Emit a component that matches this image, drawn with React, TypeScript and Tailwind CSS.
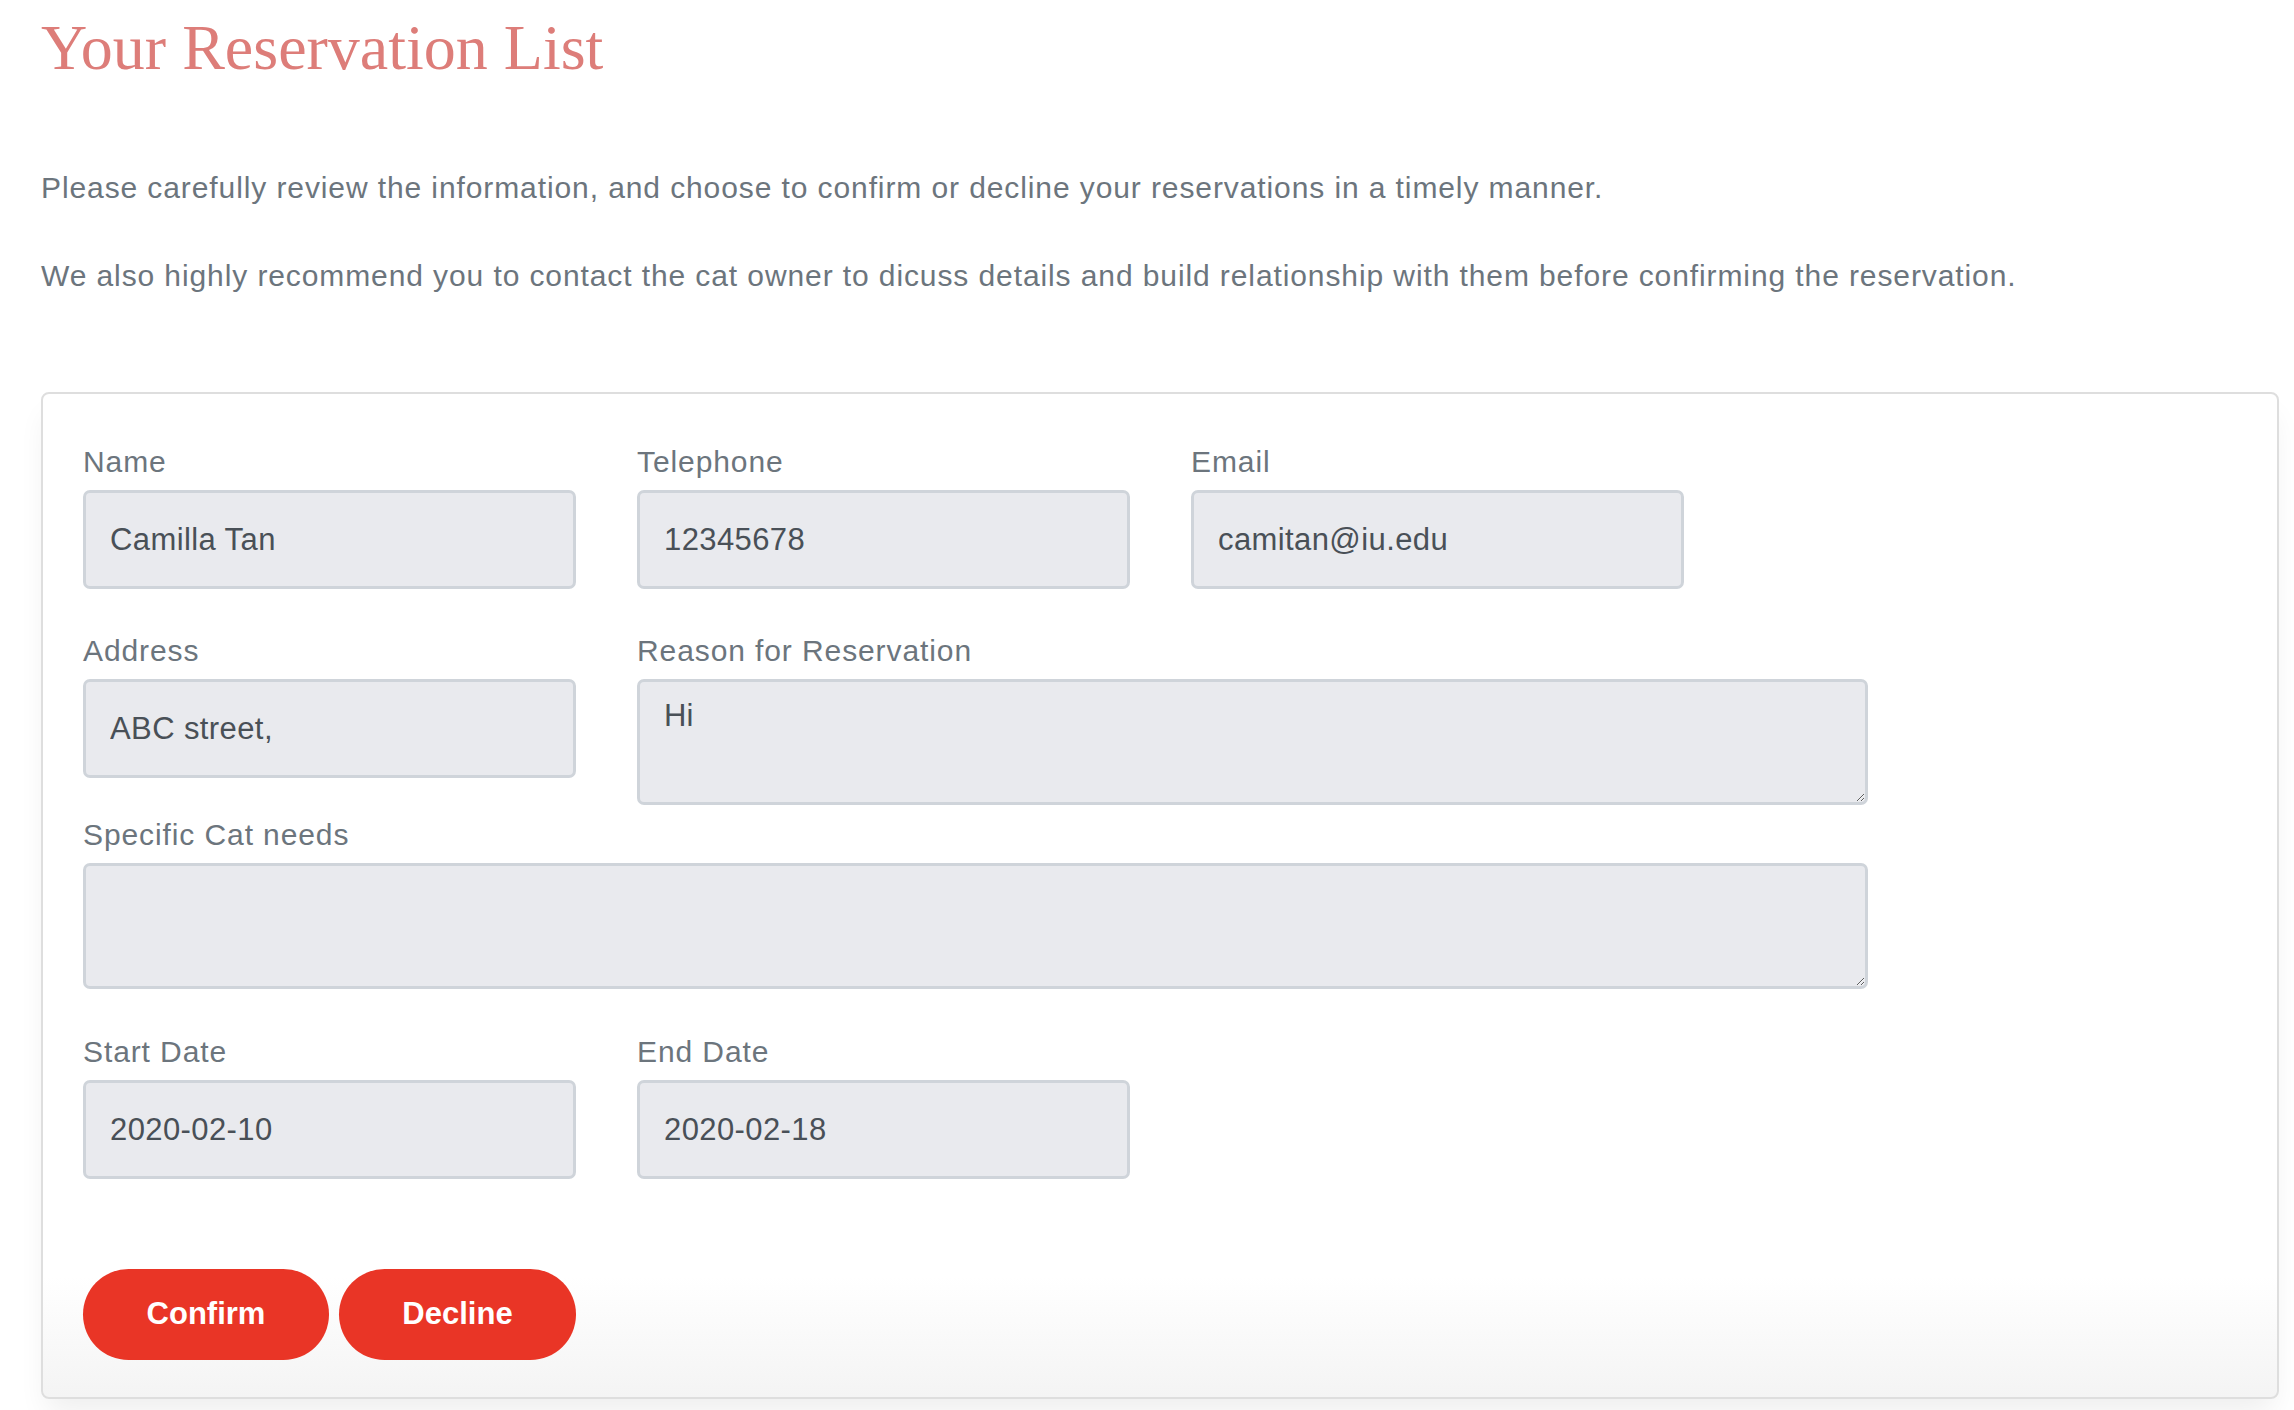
import React from "react";

const sans = "font-['Liberation_Sans',Arial,sans-serif]";

function Field({ label, value, width = "w-[493px]" }: { label: string; value: string; width?: string }) {
  return (
    <div className={`flex flex-col ${width}`}>
      <label className="text-[30px] leading-[40px] tracking-[0.9px] text-[#6c757d]">{label}</label>
      <input
        readOnly
        value={value}
        className="mt-[8px] h-[99px] w-full rounded-[7px] border-[3px] border-[#cfd4da] bg-[#e9eaee] px-[24px] text-[31px] tracking-[0.4px] text-[#495057] outline-none"
      />
    </div>
  );
}

function Area({ label, value, width, height }: { label: string; value: string; width: string; height: string }) {
  return (
    <div className={`flex flex-col ${width}`}>
      <label className="text-[30px] leading-[40px] tracking-[0.9px] text-[#6c757d]">{label}</label>
      <textarea
        readOnly
        value={value}
        className={`mt-[8px] ${height} w-full resize-y rounded-[7px] border-[3px] border-[#cfd4da] bg-[#e9eaee] px-[24px] py-[12px] text-[31px] leading-[44px] text-[#495057] outline-none`}
      />
    </div>
  );
}

export default function App() {
  return (
    <div className={`min-h-screen bg-white ${sans}`}>
      <div className="pl-[41px] pr-[15px]">
        <h1 className="pt-[16px] font-['Liberation_Serif','Times_New_Roman',serif] text-[64px] leading-[64px] text-[#dd7d79]">
          Your Reservation List
        </h1>

        <p className="mt-[88px] text-[30px] leading-[40px] tracking-[0.9px] text-[#6c757d]">
          Please carefully review the information, and choose to confirm or decline your reservations in a timely manner.
        </p>
        <p className="mt-[48px] text-[30px] leading-[40px] tracking-[0.9px] text-[#6c757d]">
          We also highly recommend you to contact the cat owner to dicuss details and build relationship with them before confirming the reservation.
        </p>

        <div className="mt-[96px] h-[1007px] w-[2238px] rounded-[8px] border-2 border-[#dedede] bg-[linear-gradient(to_bottom,#ffffff_88%,#f4f4f4_100%)] px-[40px] pt-[48px] shadow-[0_18px_30px_-6px_rgba(0,0,0,0.07)]">
          <div className="flex gap-x-[61px]">
            <Field label="Name" value="Camilla Tan" />
            <Field label="Telephone" value="12345678" />
            <Field label="Email" value="camitan@iu.edu" />
          </div>

          <div className="mt-[42px] flex items-start gap-x-[61px]">
            <Field label="Address" value="ABC street," />
            <Area label="Reason for Reservation" value="Hi" width="w-[1231px]" height="h-[126px]" />
          </div>

          <div className="mt-[10px]">
            <Area label="Specific Cat needs" value="" width="w-[1785px]" height="h-[126px]" />
          </div>

          <div className="mt-[43px] flex gap-x-[61px]">
            <Field label="Start Date" value="2020-02-10" />
            <Field label="End Date" value="2020-02-18" />
          </div>

          <div className="mt-[90px] flex gap-x-[10px]">
            <button className="h-[91px] w-[246px] rounded-full bg-[#e93526] text-[31px] font-bold text-white">Confirm</button>
            <button className="h-[91px] w-[237px] rounded-full bg-[#e93526] text-[31px] font-bold text-white">Decline</button>
          </div>
        </div>
      </div>
    </div>
  );
}
